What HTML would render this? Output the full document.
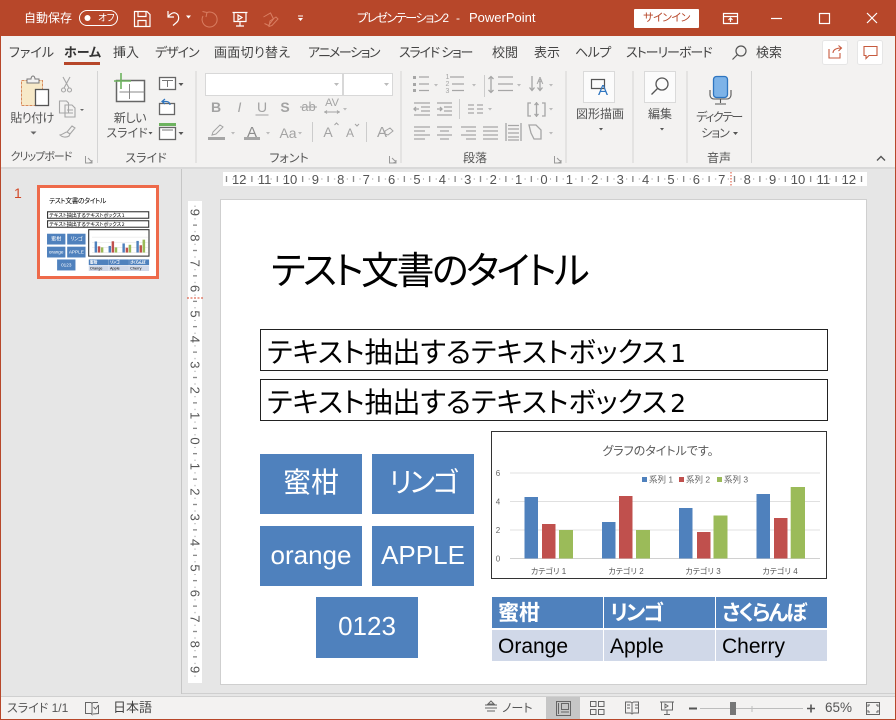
<!DOCTYPE html>
<html lang="ja"><head><meta charset="utf-8"><title>PowerPoint</title>
<style>
html,body{margin:0;padding:0}
body{width:896px;height:720px;overflow:hidden;position:relative;background:#E6E6E6;font-family:"Liberation Sans","Noto Sans CJK JP",sans-serif;font-feature-settings:"palt";color:#444}
.a{position:absolute}
.t{position:absolute;white-space:nowrap;line-height:20px;font-size:13px;color:#444}
.c{transform:translateX(-50%)}
.w{color:#fff}
.g{color:#555;font-size:12px}
svg{position:absolute;left:0;top:0}
svg text{font-family:"Liberation Sans","Noto Sans CJK JP",sans-serif;font-feature-settings:"palt"}
.sl{position:absolute;left:0;top:0;width:896px;height:720px}
.bx{position:absolute;left:260px;width:566px;height:40px;border:1px solid #222;background:#fff}
.bx span{position:absolute;left:6px;top:1px;font-size:28px;line-height:44px;color:#000;white-space:nowrap}
.bx i{font-style:normal;font-family:"DejaVu Sans",sans-serif;font-size:25px;margin-left:3px}
.bl{position:absolute;width:102px;height:60px;background:#4F81BD;color:#fff;text-align:center;line-height:58px;font-size:26px;white-space:nowrap}
.k{font-size:28px;line-height:58px}
.cell{position:absolute;height:31px;line-height:33px;padding-left:6px;box-sizing:border-box;white-space:nowrap;font-size:21px;color:#000}
.h{background:#4F81BD;color:#fff;font-weight:700;font-size:21px}
.r{background:#D0D8E8}
.thumb{transform-origin:0 0;transform:translate(40px,188px) scale(.18) translate(-221px,-200px)}
.thumb .bx{border:6px solid #333;box-sizing:border-box;height:42px;width:568px}
.thumb .bx span{line-height:30px}
.thumb .ch{stroke-width:6}
</style></head>
<body>
<!-- chrome backgrounds -->
<div class="a" style="left:0;top:0;width:896px;height:36px;background:#B7472A"></div>
<div class="a" style="left:0;top:36px;width:896px;height:131px;background:#F3F2F1"></div>
<div class="a" style="left:0;top:167px;width:896px;height:2px;background:#D9D9D9"></div>
<div class="a" style="left:181px;top:169px;width:1px;height:525px;background:#C6C6C6"></div>
<div class="a" style="left:182px;top:693px;width:714px;height:1px;background:#CFCFCF"></div>
<div class="a" style="left:0;top:696px;width:896px;height:1px;background:#D0D0D0"></div>
<div class="a" style="left:0;top:697px;width:896px;height:22px;background:#F3F2F1"></div>
<div class="a" style="left:546px;top:697px;width:34px;height:22px;background:#C6C6C6"></div>
<div class="a" style="left:0;top:36px;width:1px;height:684px;background:#B7472A"></div>
<div class="a" style="left:895px;top:36px;width:1px;height:684px;background:#B7472A"></div>
<div class="a" style="left:0;top:719px;width:896px;height:1px;background:#B7472A"></div>

<!-- rulers + slide bg -->
<div class="a" style="left:223px;top:172px;width:644px;height:14px;background:#fff"></div>
<div class="a" style="left:188px;top:201px;width:14px;height:482px;background:#fff"></div>
<div class="a" style="left:221px;top:200px;width:645px;height:484px;background:#fff;box-shadow:0 0 0 1px #CFCFCF"></div>

<!-- thumbnail frame -->
<div class="a" style="left:37px;top:185px;width:116px;height:88px;border:3px solid #EE6A4A;background:#fff"></div>
<div class="t" style="left:14px;top:183px;color:#D24726;font-size:14px">1</div>

<!-- slide main -->
<div class="sl">
 <div class="t" style="left:271px;top:248px;font-size:38px;letter-spacing:-2.600px;line-height:48px;color:#000">テスト文書のタイトル</div>
 <div class="bx" style="top:329px"><span>テキスト抽出するテキストボックス<i>1</i></span></div>
 <div class="bx" style="top:379px"><span>テキスト抽出するテキストボックス<i>2</i></span></div>
 <div class="bl k" style="left:260px;top:454px">蜜柑</div>
 <div class="bl k" style="left:372px;top:454px;letter-spacing:-2px">リンゴ</div>
 <div class="bl" style="left:260px;top:526px">orange</div>
 <div class="bl" style="left:372px;top:526px">APPLE</div>
 <div class="bl" style="left:316px;top:597px;height:61px">0123</div>
 <div class="cell h" style="left:492px;top:597px;width:111px">蜜柑</div>
 <div class="cell h" style="left:604px;top:597px;width:111px;letter-spacing:-2px">リンゴ</div>
 <div class="cell h" style="left:716px;top:597px;width:111px;letter-spacing:-2px">さくらんぼ</div>
 <div class="cell r" style="left:492px;top:630px;width:111px">Orange</div>
 <div class="cell r" style="left:604px;top:630px;width:111px">Apple</div>
 <div class="cell r" style="left:716px;top:630px;width:111px">Cherry</div>
 <svg width="896" height="720" viewBox="0 0 896 720">
  <rect class="ch" x="491.500" y="431.500" width="335" height="147" fill="#fff" stroke="#333"/>
  <text x="658" y="455" font-size="12" fill="#595959" text-anchor="middle">グラフのタイトルです。</text>
  <g stroke="#E0E0E0"><path d="M510 473h310M510 501.500h310M510 530h310"/><path d="M510 558.500h310" stroke="#D0D0D0"/></g>
  <g fill="#4F81BD"><rect x="524.500" y="497" width="13.500" height="61.500"/><rect x="602" y="522" width="13.500" height="36.500"/><rect x="679" y="508" width="13.500" height="50.500"/><rect x="756.500" y="494" width="13.500" height="64.500"/><rect x="642" y="477" width="5" height="5"/></g>
  <g fill="#C0504D"><rect x="542" y="524" width="13.500" height="34.500"/><rect x="619" y="496" width="13.500" height="62.500"/><rect x="697" y="532" width="13.500" height="26.500"/><rect x="774" y="518" width="13.500" height="40.500"/><rect x="679" y="477" width="5" height="5"/></g>
  <g fill="#9BBB59"><rect x="559" y="530" width="14" height="28.500"/><rect x="636" y="530" width="14" height="28.500"/><rect x="713.500" y="515.500" width="14" height="43"/><rect x="790.700" y="487" width="14.300" height="71.500"/><rect x="717" y="477" width="5" height="5"/></g>
  <g font-size="8.500" fill="#666"><text x="649" y="482.500">系列 1</text><text x="686" y="482.500">系列 2</text><text x="724" y="482.500">系列 3</text></g>
  <g font-size="8" fill="#666" text-anchor="middle"><text x="498" y="476">6</text><text x="498" y="504.500">4</text><text x="498" y="533">2</text><text x="498" y="561.500">0</text></g>
  <g font-size="8" fill="#595959" text-anchor="middle"><text x="548.500" y="574">カテゴリ 1</text><text x="626" y="574">カテゴリ 2</text><text x="703" y="574">カテゴリ 3</text><text x="780" y="574">カテゴリ 4</text></g>
 </svg>
</div>

<!-- slide thumbnail copy -->
<div class="sl thumb">
 <div class="t" style="left:271px;top:248px;font-size:38px;letter-spacing:-2.600px;line-height:48px;color:#000">テスト文書のタイトル</div>
 <div class="bx" style="top:329px"><span>テキスト抽出するテキストボックス<i>1</i></span></div>
 <div class="bx" style="top:379px"><span>テキスト抽出するテキストボックス<i>2</i></span></div>
 <div class="bl k" style="left:260px;top:454px">蜜柑</div>
 <div class="bl k" style="left:372px;top:454px;letter-spacing:-2px">リンゴ</div>
 <div class="bl" style="left:260px;top:526px">orange</div>
 <div class="bl" style="left:372px;top:526px">APPLE</div>
 <div class="bl" style="left:316px;top:597px;height:61px">0123</div>
 <div class="cell h" style="left:492px;top:597px;width:111px">蜜柑</div>
 <div class="cell h" style="left:604px;top:597px;width:111px;letter-spacing:-2px">リンゴ</div>
 <div class="cell h" style="left:716px;top:597px;width:111px;letter-spacing:-2px">さくらんぼ</div>
 <div class="cell r" style="left:492px;top:630px;width:111px">Orange</div>
 <div class="cell r" style="left:604px;top:630px;width:111px">Apple</div>
 <div class="cell r" style="left:716px;top:630px;width:111px">Cherry</div>
 <svg width="896" height="720" viewBox="0 0 896 720">
  <rect class="ch" x="491.500" y="431.500" width="335" height="147" fill="#fff" stroke="#333"/>
  <g stroke="#E0E0E0" stroke-width="3"><path d="M510 473h310M510 501.500h310M510 530h310M510 558.500h310"/></g>
  <g fill="#4F81BD"><rect x="524.500" y="497" width="13.500" height="61.500"/><rect x="602" y="522" width="13.500" height="36.500"/><rect x="679" y="508" width="13.500" height="50.500"/><rect x="756.500" y="494" width="13.500" height="64.500"/></g>
  <g fill="#C0504D"><rect x="542" y="524" width="13.500" height="34.500"/><rect x="619" y="496" width="13.500" height="62.500"/><rect x="697" y="532" width="13.500" height="26.500"/><rect x="774" y="518" width="13.500" height="40.500"/></g>
  <g fill="#9BBB59"><rect x="559" y="530" width="14" height="28.500"/><rect x="636" y="530" width="14" height="28.500"/><rect x="713.500" y="515.500" width="14" height="43"/><rect x="790.700" y="487" width="14.300" height="71.500"/></g>
 </svg>
</div>

<!-- page-wide icon and ruler layer -->
<svg width="896" height="720" viewBox="0 0 896 720">
 <defs>
  <pattern id="hr" patternUnits="userSpaceOnUse" x="544" y="172" width="25.400" height="14"><rect x="12.200" y="4" width="1" height="6" fill="#666"/><rect x="6" y="6.500" width="1" height="1" fill="#888"/><rect x="18.700" y="6.500" width="1" height="1" fill="#888"/></pattern>
  <pattern id="vr" patternUnits="userSpaceOnUse" x="188" y="441" width="14" height="25.400"><rect x="5" y="12.200" width="4" height="1" fill="#666"/><rect x="6.500" y="6" width="1" height="1" fill="#888"/><rect x="6.500" y="18.700" width="1" height="1" fill="#888"/></pattern>
 </defs>
 <rect x="225" y="172" width="640" height="14" fill="url(#hr)"/>
 <rect x="188" y="203" width="14" height="478" fill="url(#vr)"/>
 <g font-size="13" fill="#555" text-anchor="middle">
  <text x="239.200" y="184">12</text><text x="264.600" y="184">11</text><text x="290" y="184">10</text><text x="315.400" y="184">9</text><text x="340.800" y="184">8</text><text x="366.200" y="184">7</text><text x="391.600" y="184">6</text><text x="417" y="184">5</text><text x="442.400" y="184">4</text><text x="467.800" y="184">3</text><text x="493.200" y="184">2</text><text x="518.600" y="184">1</text><text x="544" y="184">0</text><text x="569.400" y="184">1</text><text x="594.800" y="184">2</text><text x="620.200" y="184">3</text><text x="645.600" y="184">4</text><text x="671" y="184">5</text><text x="696.400" y="184">6</text><text x="721.800" y="184">7</text><text x="747.200" y="184">8</text><text x="772.600" y="184">9</text><text x="798" y="184">10</text><text x="823.400" y="184">11</text><text x="848.800" y="184">12</text>
 </g>
 <g font-size="13" fill="#555" text-anchor="middle">
  <text transform="translate(190.500,212.400) rotate(90)">9</text><text transform="translate(190.500,237.800) rotate(90)">8</text><text transform="translate(190.500,263.200) rotate(90)">7</text><text transform="translate(190.500,288.600) rotate(90)">6</text><text transform="translate(190.500,314) rotate(90)">5</text><text transform="translate(190.500,339.400) rotate(90)">4</text><text transform="translate(190.500,364.800) rotate(90)">3</text><text transform="translate(190.500,390.200) rotate(90)">2</text><text transform="translate(190.500,415.600) rotate(90)">1</text><text transform="translate(190.500,441) rotate(90)">0</text><text transform="translate(190.500,466.400) rotate(90)">1</text><text transform="translate(190.500,491.800) rotate(90)">2</text><text transform="translate(190.500,517.200) rotate(90)">3</text><text transform="translate(190.500,542.600) rotate(90)">4</text><text transform="translate(190.500,568) rotate(90)">5</text><text transform="translate(190.500,593.400) rotate(90)">6</text><text transform="translate(190.500,618.800) rotate(90)">7</text><text transform="translate(190.500,644.200) rotate(90)">8</text><text transform="translate(190.500,669.600) rotate(90)">9</text>
 </g>
 <path d="M731 172v14" stroke="#D9472B" stroke-dasharray="1.500 1.500"/>
 <path d="M187 298h16" stroke="#D9472B" stroke-dasharray="2 1.500"/>

 <!-- title bar icons -->
 <rect x="79.500" y="10.500" width="38" height="15" rx="7.500" fill="none" stroke="#fff"/>
 <circle cx="87.500" cy="18" r="3" fill="#fff"/>
 <g fill="none" stroke="#fff" stroke-width="1.200">
  <path d="M134.500 11.500h12.500l3 3v12h-15.500z"/><path d="M138 11.500v5h8v-5M138 26.500v-6h8v6"/>
  <path d="M168 11v6h6M168 17c2-3 5-5 7.500-4 4 1.500 4 7 1 9.500l-3.500 3"/>
  <path d="M232.500 12.500h15M234 12.500v9h12v-9M240 21.500v4M236 26h8M238 15l4 2.500-4 2.500z"/>
  <path d="M723.500 13.500h14v10h-14zM723.500 16.500h14M730.500 22v-4M728.500 20l2-2 2 2"/>
  <path d="M771 18.500h11"/><rect x="819.500" y="13.500" width="10" height="10"/><path d="M867 13l10 10M877 13l-10 10"/>
 </g>
 <path d="M186 15.500h5l-2.500 3zM298 15.500h5v1h-5zM298 18h5l-2.500 3z" fill="#fff"/>
 <g fill="none" stroke="#D97E62" stroke-width="1">
  <path d="M207 12.500a7.500 7.500 0 1 1-4 3.500M202.500 11.500l4.500 1-1 4.500"/>
  <path d="M263.500 17l7-4 3 6-5 6.500-4-2M270 21l6-4 2 2-6 6.500-3 1z"/>
 </g>

 <!-- share / comment -->
 <g fill="#fff" stroke="#E6E6E6"><rect x="822.500" y="40.500" width="25" height="24" rx="2"/><rect x="857.500" y="40.500" width="25" height="24" rx="2"/></g>
 <g fill="none" stroke="#C75A3E" stroke-width="1.100"><path d="M829 49v9h11v-5M833 53c0-3 3-5 8-5M838.500 45.500l3 2.500-3 3"/><path d="M864 46.500h13v9h-8l-3 3v-3h-2z"/></g>
 <g fill="none" stroke="#555" stroke-width="1.200"><circle cx="741" cy="51" r="5"/><path d="M737.500 54.500l-5 5"/></g>

 <!-- ribbon separators -->
 <g stroke="#D4D4D4"><path d="M97.500 71v92M196 71v92M401 71v92M566 71v92M633 71v92M687 71v92M751.500 71v92"/><path d="M312.500 122v20M366.500 122v20M484.500 75v22M459.500 99v20" stroke="#CCC"/></g>

 <!-- clipboard -->
 <rect x="21.500" y="80.500" width="21" height="25" fill="#F7E9C8" stroke="#D88A5A" stroke-dasharray="3 1"/>
 <path d="M27 79h4a2 3 0 0 1 4 0h4v4H27z" fill="#F3F2F1" stroke="#777"/>
 <rect x="35.500" y="89.500" width="13" height="16" fill="#fff" stroke="#555" stroke-width="1.300"/>
 <g fill="none" stroke="#A6A6A6" stroke-width="1.100">
  <path d="M63 77l6 11M70 77l-6 11"/><circle cx="63.500" cy="90" r="2"/><circle cx="69.500" cy="90" r="2"/>
  <path d="M59.500 101h7l2 2v10h-9zM65 105h7l3 3v9h-10z"/><path d="M67 110h6M67 113h6"/>
  <path d="M72 126l3 2-5 6-3-2zM67 132c-2 0-3 2-7 3 2 2 6 3 9 1l1-2"/>
 </g>
 <path d="M30.500 131.500h6l-3 3zM80 109h4l-2 2z" fill="#666"/>
 <g fill="none" stroke="#999"><path d="M85.500 156v7h7M88 158l4 4M92 160v2.500h-2.500"/><path d="M389.500 156v7h7M392 158l4 4M396 160v2.500h-2.500"/><path d="M554.500 156v7h7M557 158l4 4M561 160v2.500h-2.500"/></g>

 <!-- new slide -->
 <rect x="116.500" y="80.500" width="28" height="21" fill="#fff" stroke="#666" stroke-width="1.500"/>
 <path d="M129.500 84v15M119.500 92h25" stroke="#888"/>
 <path d="M121 73v16M114 81h17" stroke="#6DB35F" stroke-width="1.600"/>
 <g fill="#fff" stroke="#666" stroke-width="1.300"><rect x="159.500" y="77.500" width="16" height="12"/><rect x="159.500" y="103.500" width="15" height="11"/><rect x="159.500" y="127.500" width="16" height="12"/></g>
 <path d="M162 80.500h11M167.500 81v6M162 130h11" stroke="#777" fill="none"/>
 <rect x="159" y="123" width="17" height="3" fill="#6DB35F"/>
 <path d="M165 104l-3-2.500 3-2.500M162 101.500h4c3 0 4 2 4 3.500" fill="none" stroke="#2E75C0" stroke-width="1.200"/>
 <path d="M178.500 83h5l-2.500 3zM178.500 132h5l-2.500 3zM148.500 132h4l-2 2.500z" fill="#555"/>

 <!-- font boxes -->
 <g fill="#fff" stroke="#D8D8D8"><rect x="205.500" y="73.500" width="137" height="22"/><rect x="343.500" y="73.500" width="49" height="22"/></g>
 <path d="M334 83h5l-2.500 3zM384 83h5l-2.500 3z" fill="#BBB"/>
 <g fill="#A3A3A3" font-size="14" text-anchor="middle">
  <text x="216" y="112" font-weight="700">B</text><text x="239.500" y="112" font-style="italic">I</text><text x="262" y="112">U</text><text x="285" y="112" font-weight="700">S</text><text x="308.500" y="111" font-size="13">ab</text><text x="332" y="106" font-size="11">AV</text>
  <text x="252" y="137" font-size="15" fill="#8C8C8C">A</text><text x="288" y="138" font-size="14">Aa</text><text x="328" y="137">A</text><text x="350" y="137" font-size="12">A</text><text x="382" y="137" font-size="15">A</text>
 </g>
 <g fill="none" stroke="#A3A3A3">
  <path d="M255.500 115h13M300 107h17M324 112h16M325 112l2-1.500m-2 1.500l2 1.500M339 112l-2-1.500m2 1.500l-2 1.500"/>
  <path d="M334.500 125l2-2 2 2M355 124l2 2 2-2"/>
  <path d="M213 132l7-7 3 2-7 7-4 1zM385 131l5-3 3 3-5 4-3-1z"/>
 </g>
 <rect x="208" y="137" width="17" height="3" fill="#A6A6A6"/>
 <rect x="244" y="137" width="16" height="3" fill="#A6A6A6"/>
 <path d="M231 132h4l-2 2.500zM266 132h4l-2 2.500zM298 132h4l-2 2.500zM343 108h4l-2 2.500z" fill="#BBB"/>

 <!-- paragraph -->
 <g fill="none" stroke="#A6A6A6" stroke-width="1.300">
  <path d="M419 77h10M419 84h10M419 90.500h10M450 77h14M452 84h12M452 90.500h12"/>
  <path d="M498 77h15M498 84h15M498 90.500h15M491 77v15M488.500 79l2.500-2.500 2.500 2.500M488.500 90l2.500 2.500 2.500-2.500"/>
  <path d="M532 76v14M529.500 87.500l2.500 3 2.500-3M540 79v11M537.500 87.500l2.500 3 2.500-3"/>
  <path d="M414 103h16M421 107h9M421 111h9M414 115h16M414 109h5M416 107l-2 2 2 2"/>
  <path d="M437 103h15M444 107h8M444 111h8M437 115h15M437 109h5M440 107l2 2-2 2"/>
  <path d="M468 105h6M477 105h6M468 109h6M477 109h6M468 113h6M477 113h6"/>
  <path d="M531 103h-3v13h3M542 103h3v13h-3M536.500 102v15M534.500 105l2-2 2 2M534.500 114l2 2 2-2"/>
  <path d="M414 127h16M414 131h11M414 135h16M414 139h11M437 127h15M440 131h9M437 135h15M440 139h9M461 127h15M466 131h10M461 135h15M466 139h10M483 127h15M483 131h15M483 135h15M483 139h15"/>
  <path d="M506 123v18M521 123v18M508 129h11M508 133h11M508 137h11M508 140h11M508 125.500h11"/>
  <path d="M529 125h7l5 5v9h-7l-3-6z"/>
 </g>
 <g fill="#A6A6A6"><rect x="413" y="76" width="3" height="3"/><rect x="413" y="83" width="3" height="3"/><rect x="413" y="89" width="3" height="3"/></g>
 <g fill="#A6A6A6" font-size="7" text-anchor="middle"><text x="447.500" y="79">1</text><text x="447.500" y="86">2</text><text x="447.500" y="93">3</text><text x="540" y="84" font-size="10">A</text></g>
 <path d="M472 84h4l-2 2.500zM434 84h4l-2 2.500zM517 84h4l-2 2.500zM549 84h4l-2 2.500zM488 108h4l-2 2.500zM549 108h4l-2 2.500zM549 132h4l-2 2.500z" fill="#BBB"/>

 <!-- drawing / edit / mic -->
 <g fill="#FBFBFB" stroke="#DADADA"><rect x="583.500" y="71.500" width="31" height="31"/><rect x="644.500" y="71.500" width="31" height="31"/></g>
 <path d="M591.500 79.500h13v9h-13z" fill="none" stroke="#555" stroke-width="1.200"/>
 <text x="603" y="95" font-size="15" fill="#2E75C0" text-anchor="middle">A</text>
 <g fill="none" stroke="#555" stroke-width="1.300"><circle cx="662" cy="84" r="6"/><path d="M657.500 88.500l-6 6"/></g>
 <path d="M660 128h4l-2 2.500zM599 128h4l-2 2.500z" fill="#555"/>
 <rect x="713.500" y="76.500" width="14" height="21" rx="3" fill="#7DB3E8" stroke="#2E75C0" stroke-width="1.300"/>
 <path d="M710 90v5a4 4 0 0 0 4 4h13a4 4 0 0 0 4-4v-5M720.500 99v4M715 104h11" fill="none" stroke="#555" stroke-width="1.100"/>
 <path d="M733 132h5l-2.500 3z" fill="#555"/>
 <path d="M877 160.500l4-4 4 4" fill="none" stroke="#555" stroke-width="1.400"/>

 <!-- status bar icons -->
 <g fill="none" stroke="#666">
  <path d="M85.500 702.500h5.500l1 1v11l-1-1h-5.500zM92 703.500l1-1h5M98.500 705v8.500l-5.500.5"/><path d="M93.500 707l2 2 3-4"/>
  <path d="M485 705h12M485 708h12M487 711h8M491 701l-3 3h6z"/>
  <rect x="556.500" y="701.500" width="14" height="14"/><rect x="561.500" y="703.500" width="7" height="6"/><path d="M558.500 703v11M561 712h8"/>
  <rect x="590.500" y="701.500" width="5.500" height="5"/><rect x="598.500" y="701.500" width="5.500" height="5"/><rect x="590.500" y="709.500" width="5.500" height="5"/><rect x="598.500" y="709.500" width="5.500" height="5"/>
  <path d="M625.500 702h5l1.500 1 1.500-1h5v11h-5l-1.500 1-1.500-1h-5zM632 703v10M627 705h3M627 708h3M635 705h3M635 708h3"/>
  <path d="M660 702h14M661.500 702v8h11v-8M667 710v4M664 714.500h6M665 704l3 2-3 2z"/>
  <rect x="866.500" y="702.500" width="13" height="12"/><path d="M870 705h-2v2M876 705h2v2M870 712h-2v-2M876 712h2v-2"/>
 </g>
 <path d="M689 708.500h8" stroke="#555" stroke-width="2"/>
 <path d="M700 708.500h103" stroke="#BDBDBD"/><path d="M752 706v6" stroke="#BDBDBD"/>
 <rect x="730" y="702" width="6" height="13" fill="#777"/>
 <path d="M807 708.500h8M811 704.500v8" stroke="#555" stroke-width="1.600"/>
</svg>

<!-- text -->
<div class="t w" style="left:24px;top:8px;font-size:12px">自動保存</div>
<div class="t w" style="left:98px;top:9px;font-size:9.500px">オフ</div>
<div class="t w" style="left:357px;top:8px;font-size:12px;letter-spacing:-1.300px">プレゼンテーション2</div>
<div class="t w" style="left:456px;top:8px;font-size:12px">-</div>
<div class="t w" style="left:469px;top:8px;font-size:13px">PowerPoint</div>
<div class="a" style="left:634px;top:9px;width:65px;height:19px;background:#fff;border-radius:1px"></div>
<div class="t c" style="left:666.500px;top:8px;font-size:11px;letter-spacing:-.5px;color:#B7472A">サインイン</div>

<div class="t" style="left:9px;top:43px">ファイル</div>
<div class="t" style="left:64px;top:43px;font-weight:700;color:#333">ホーム</div>
<div class="a" style="left:64px;top:62px;width:36px;height:3px;background:#B7472A"></div>
<div class="t" style="left:113px;top:43px">挿入</div>
<div class="t" style="left:155px;top:43px;letter-spacing:-1px">デザイン</div>
<div class="t" style="left:214px;top:43px;letter-spacing:.3px">画面切り替え</div>
<div class="t" style="left:308px;top:43px;letter-spacing:-1.400px">アニメーション</div>
<div class="t" style="left:399px;top:43px;letter-spacing:-1.200px">スライド ショー</div>
<div class="t" style="left:492px;top:43px">校閲</div>
<div class="t" style="left:534px;top:43px">表示</div>
<div class="t" style="left:575px;top:43px;letter-spacing:-.5px">ヘルプ</div>
<div class="t" style="left:626px;top:43px;letter-spacing:-1px">ストーリーボード</div>
<div class="t" style="left:756px;top:43px">検索</div>

<div class="t g c" style="left:32px;top:108px;letter-spacing:-.6px">貼り付け</div>
<div class="t g c" style="left:130px;top:108px;letter-spacing:-.3px">新しい</div>
<div class="t g c" style="left:127px;top:123px">スライド</div>
<div class="t g c" style="left:600px;top:104px">図形描画</div>
<div class="t g c" style="left:660px;top:104px">編集</div>
<div class="t g c" style="left:719px;top:107px;letter-spacing:-1.500px">ディクテー</div>
<div class="t g c" style="left:715px;top:123px;letter-spacing:-1px">ション</div>
<div class="t g c" style="left:41px;top:147px;font-size:11px;letter-spacing:-1px">クリップボード</div>
<div class="t g c" style="left:146px;top:148px">スライド</div>
<div class="t g c" style="left:289px;top:148px">フォント</div>
<div class="t g c" style="left:475px;top:148px">段落</div>
<div class="t g c" style="left:719px;top:148px">音声</div>

<div class="t g" style="left:7px;top:698px">スライド 1/1</div>
<div class="t" style="left:113px;top:698px">日本語</div>
<div class="t g" style="left:502px;top:698px">ノート</div>
<div class="t" style="left:825px;top:698px;font-size:13.500px;color:#555">65%</div>
</body></html>
